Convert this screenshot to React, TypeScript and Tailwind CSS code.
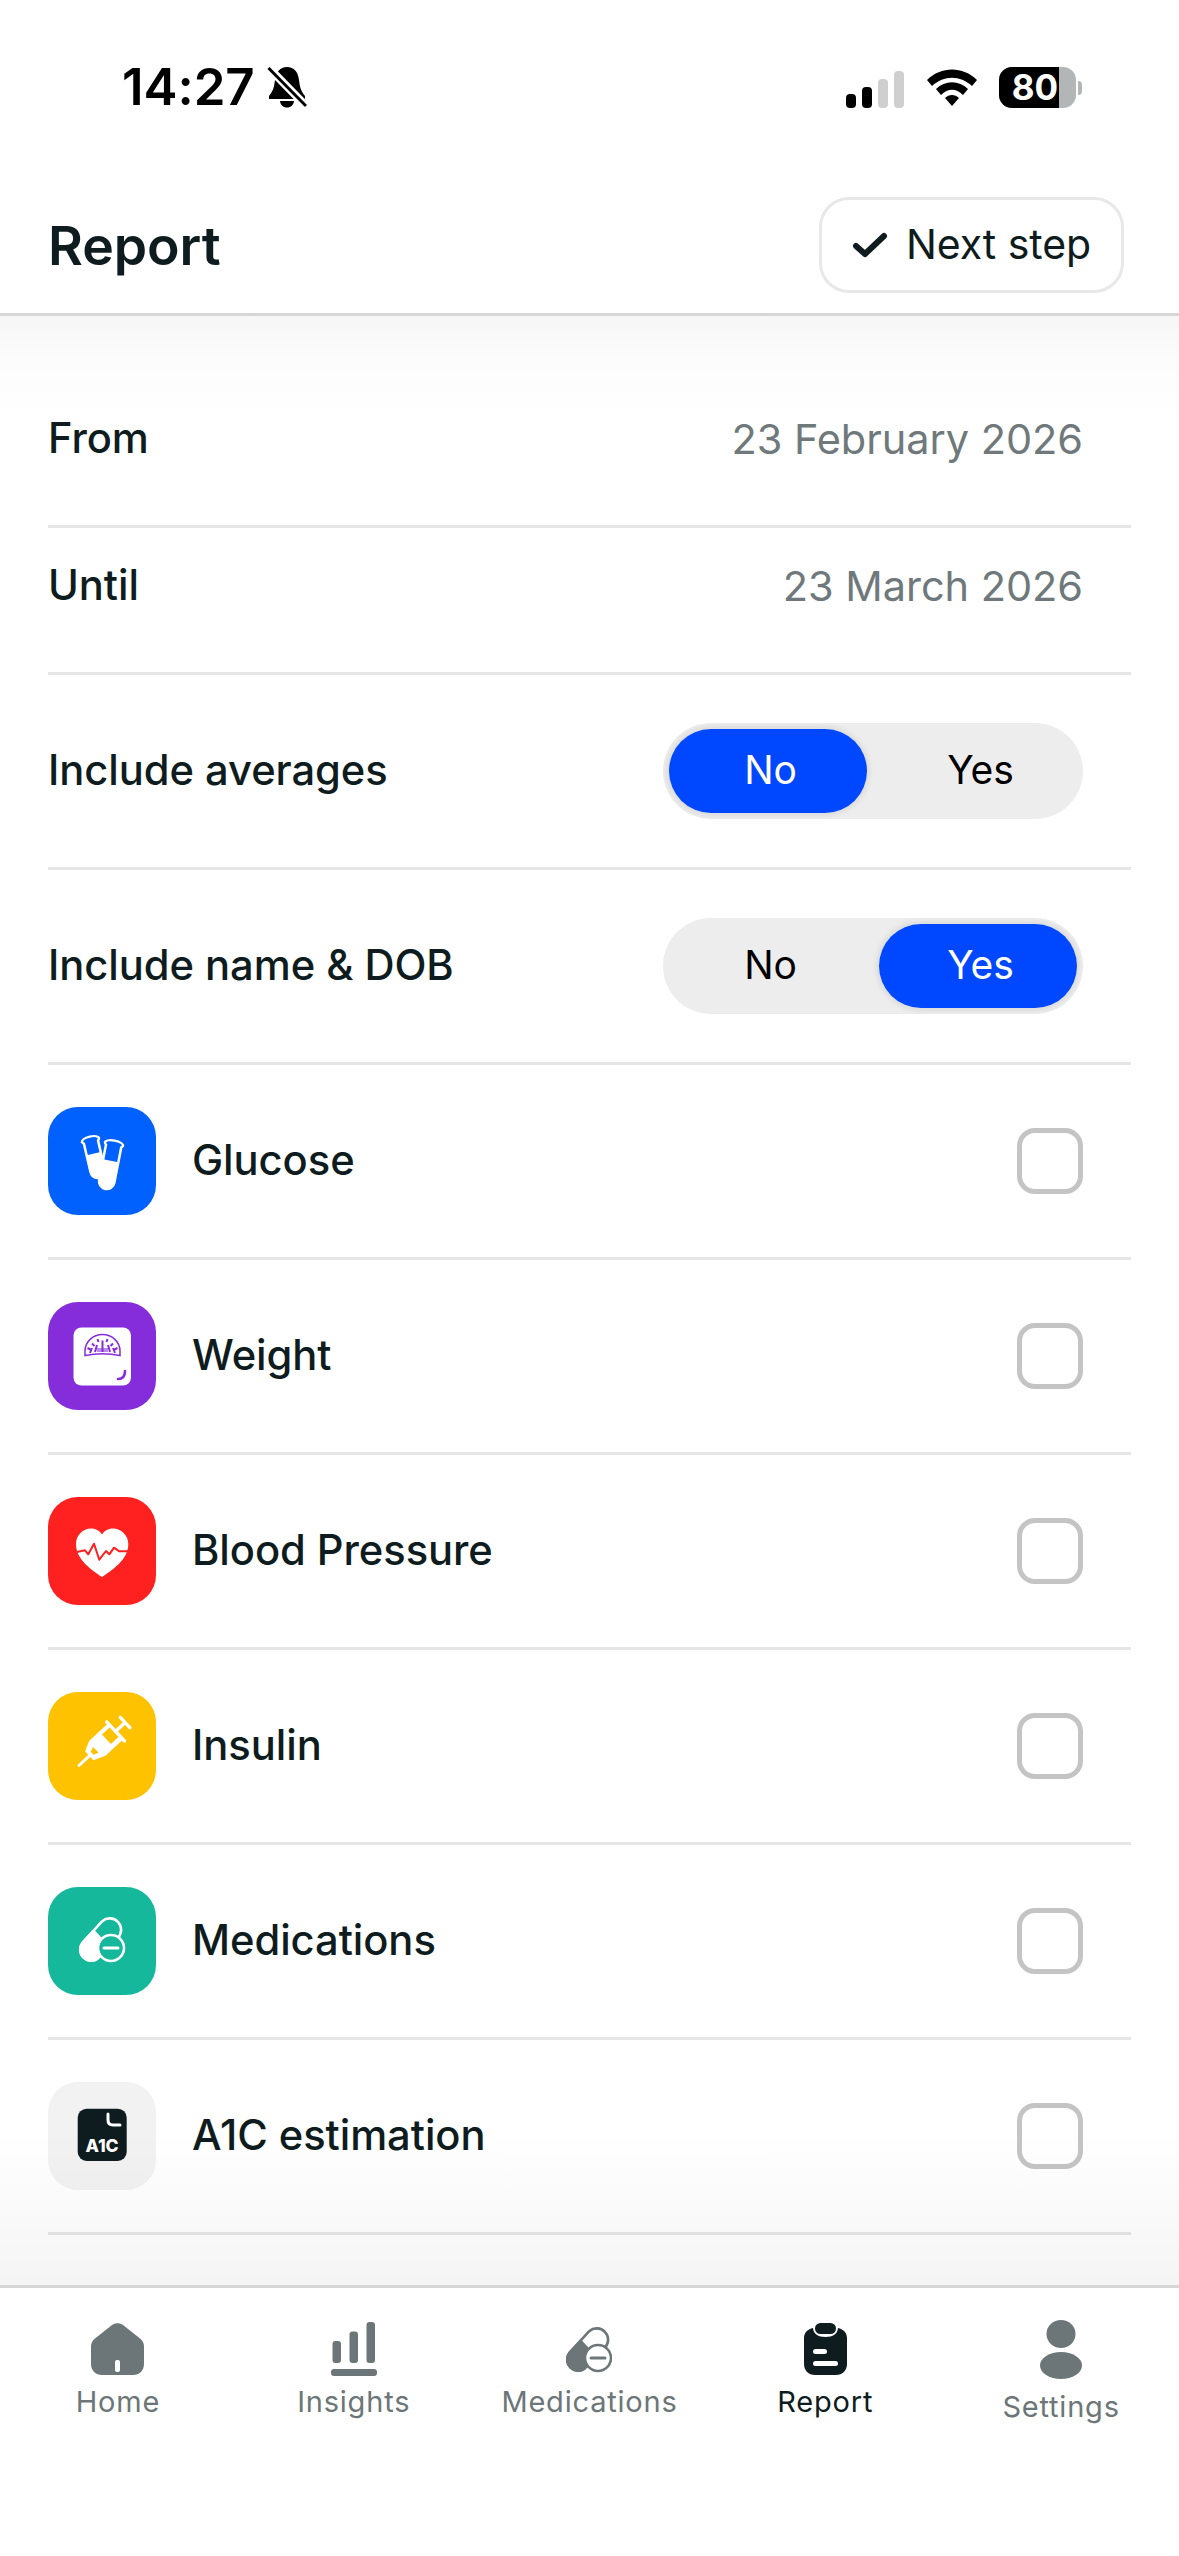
import type { ReactNode } from "react";

const ink = "#0e1c20";
const tabGray = "#6c7678";

function IconBox({ bg, children }: { bg: string; children: ReactNode }) {
  return (
    <div className={`h-[108px] w-[108px] shrink-0 overflow-hidden rounded-[30px] ${bg}`}>
      <svg viewBox="0 0 108 108" width="108" height="108">
        {children}
      </svg>
    </div>
  );
}

function Tube({ x, y, angle, len, w, win, fill }: { x: number; y: number; angle: number; len: number; w: number; win: number; fill: string }) {
  return (
    <g transform={`translate(${x} ${y}) rotate(${angle})`}>
      <path d={`M${-w / 2} 0 V${len - w / 2} a${w / 2} ${w / 2} 0 0 0 ${w} 0 V0 Z`} fill="#fff" />
      <ellipse cx="0" cy="0" rx={w / 2 + 1.5} ry="4.6" fill="#fff" />
      <path d={`M${-w / 2 + 2.5} 0 V${win} L${w / 2 - 2.5} ${win} V0 Z`} fill={fill} />
      <ellipse cx="0" cy="0" rx={w / 2 - 1} ry="2.4" fill={fill} />
    </g>
  );
}

function PillShape({ color, bg, stroke = 2.6 }: { color: string; bg: string; stroke?: number }) {
  return (
    <>
      <path d="M34.2 56.2 L54.2 34.2 A11.4 11.4 0 0 1 70 50.6 L49.5 71.6 A11 11 0 0 1 34.2 56.2 Z" fill="none" stroke={color} strokeWidth={stroke} />
      <path d="M34.2 56.2 L45.5 43.8 L60.5 60 L49.5 71.6 A11 11 0 0 1 34.2 56.2 Z" fill={color} stroke={color} strokeWidth={stroke} />
      <circle cx="63" cy="61" r="13" fill={bg} stroke={color} strokeWidth={stroke} />
      <path d="M56 61 H70" stroke={color} strokeWidth="3" strokeLinecap="round" />
    </>
  );
}

function GlucoseIcon() {
  return (
    <IconBox bg="bg-[#0061ff]">
      <Tube x={42.5} y={33} angle={-13} len={40} w={17} win={14} fill="#0061ff" />
      <Tube x={66} y={37} angle={11} len={47} w={18} win={17} fill="#0061ff" />
    </IconBox>
  );
}

function WeightIcon() {
  return (
    <IconBox bg="bg-[#862ddb]">
      <rect x="25.5" y="25.5" width="57.5" height="58" rx="8" fill="#fff" />
      <path d="M37 53.5 V49 A17.5 16.5 0 0 1 72 49 V53.5 Q54.5 50 37 53.5 Z" fill="none" stroke="#862ddb" strokeWidth="1.5" />
      <path d="M54.5 50 V38.5 M47 50 L49 43 M62 50 L60 43 M42 51 L44 46 M67 51 L65 46 M44 41.5 L46.5 44 M65 41.5 L62.5 44 M49.5 37 L50.5 40 M59.5 37 L58.5 40 M39.5 46 L42.5 47.5 M69.5 46 L66.5 47.5" stroke="#862ddb" strokeWidth="2" />
      <path d="M49 46 H60 V50 H49 Z" fill="#862ddb" opacity="0.55" />
      <path d="M70 77 Q77 77 77 69" fill="none" stroke="#862ddb" strokeWidth="2.6" strokeLinecap="round" />
    </IconBox>
  );
}

function HeartIcon() {
  return (
    <IconBox bg="bg-[#ff2020]">
      <path d="M54 80 C44 73 28 63 28 47 C28 38 35 31.5 43 31.5 C48 31.5 51.8 34 54 37.5 C56.2 34 60 31.5 65 31.5 C73 31.5 80.3 38 80.3 47 C80.3 63 64 73 54 80 Z" fill="#fff" />
      <path d="M29 55 L37 53.3 L40.3 57.3 L46 46.7 L51.3 62.7 L58 54 L61.3 57.3 L66 50.7 L71.3 54.3 L81 54.3" fill="none" stroke="#ff2020" strokeWidth="2" strokeLinejoin="round" />
    </IconBox>
  );
}

function InsulinIcon() {
  return (
    <IconBox bg="bg-[#ffc200]">
      <g transform="translate(31 73.5) rotate(-43)">
        <path d="M0 0 H16" stroke="#fff" strokeWidth="3" strokeLinecap="round" />
        <path d="M14 -6 L24 -11 H50 V11 H26 L14 6 Z" fill="#fff" />
        <path d="M18 -2 L23 -4 V4 L18 2 Z" fill="#ffc200" />
        <rect x="38" y="-7" width="11" height="13" fill="#ffc200" />
        <path d="M50 -13 V13" stroke="#fff" strokeWidth="3.4" strokeLinecap="round" />
        <path d="M50 0 H63" stroke="#fff" strokeWidth="3.4" />
        <path d="M63 -7 V7" stroke="#fff" strokeWidth="3.4" strokeLinecap="round" />
      </g>
    </IconBox>
  );
}

function A1cIcon() {
  return (
    <IconBox bg="bg-[#f2f2f2]">
      <rect x="29.7" y="26.7" width="49" height="52.3" rx="9" fill={ink} />
      <path d="M60 32 V38 Q60 43 65 43 H72" fill="none" stroke="#fff" strokeWidth="3" strokeLinecap="round" />
      <text x="54" y="70" textAnchor="middle" fill="#fff" fontSize="17.5" fontWeight="800" fontFamily="Inter, sans-serif">
        A1C
      </text>
    </IconBox>
  );
}

function MedsIcon() {
  return (
    <IconBox bg="bg-[#15b89a]">
      <PillShape color="#fff" bg="#15b89a" />
    </IconBox>
  );
}

function Toggle({ value }: { value: "No" | "Yes" }) {
  return (
    <div className="flex h-[96px] w-[420px] gap-[12px] rounded-full bg-[#ededed] p-[6px] text-[39px] font-normal leading-[46px]">
      {["No", "Yes"].map((opt) => (
        <div
          key={opt}
          className={
            opt === value
              ? "flex w-[198px] items-center justify-center rounded-full bg-[#0048ff] pb-[2px] pl-[5px] text-white shadow-[0_0_5px_3px_rgba(0,0,0,0.07)]"
              : "flex w-[198px] items-center justify-center rounded-full pb-[2px] pl-[5px] text-black"
          }
        >
          {opt}
        </div>
      ))}
    </div>
  );
}

function DateRow({ label, value }: { label: string; value: string }) {
  return (
    <div className="flex h-[147px] items-center justify-between border-b-[3px] border-[#e6e6e6] pb-[28px] pr-[48px]">
      <span className="mb-[2px]">{label}</span>
      <span className="text-[41.5px] font-normal text-[#6f797c]">{value}</span>
    </div>
  );
}

function ToggleRow({ label, value }: { label: string; value: "No" | "Yes" }) {
  return (
    <div className="flex h-[195px] items-center justify-between border-b-[3px] border-[#e6e6e6] pr-[48px]">
      <span className="mb-[2px]">{label}</span>
      <Toggle value={value} />
    </div>
  );
}

function CheckRow({ icon, label }: { icon: ReactNode; label: string }) {
  return (
    <div className="flex h-[195px] items-center border-b-[3px] border-[#e6e6e6] pr-[48px]">
      {icon}
      <span className="mb-[2px] ml-[36px] flex-1">{label}</span>
      <div className="h-[66px] w-[66px] rounded-[18px] border-[5px] border-[#c4c4c4] bg-white" />
    </div>
  );
}

function StatusBar() {
  return (
    <div className="flex h-[179px] items-start justify-between pl-[122px] pr-[97px] pt-[58px]">
      <div className="flex items-center gap-[12px]">
        <span className="text-[51px] font-semibold leading-[58px] text-black">14:27</span>
        <svg viewBox="0 0 40 42" width="40" height="42">
          <path d="M20 1 C27 1 31 6 32 14 C33 22 34 25 38 30 V33 H2 V30 C6 25 7 22 8 14 C9 6 13 1 20 1 Z" fill="#000" />
          <path d="M13 35 H27 C26.5 39 24 41.5 20 41.5 C16 41.5 13.5 39 13 35 Z" fill="#000" />
          <path d="M1 1 L39 40" stroke="#fff" strokeWidth="8" />
          <path d="M1.5 2 L39 40" stroke="#000" strokeWidth="3" />
        </svg>
      </div>
      <div className="flex items-center pt-[9px]">
        <div className="flex h-[41px] items-end gap-[6px]">
          <div className="h-[14px] w-[10px] rounded-[4px] bg-black" />
          <div className="h-[21px] w-[10px] rounded-[4px] bg-black" />
          <div className="h-[29px] w-[10px] rounded-[4px] bg-[#cfcfcf]" />
          <div className="h-[37px] w-[10px] rounded-[4px] bg-[#cfcfcf]" />
        </div>
        <svg viewBox="0 0 50 37" width="50" height="37" className="ml-[23px]">
          <path d="M0 11 C14 -3 36 -3 50 11 L45 17 C33 6 17 6 5 17 Z" fill="#000" />
          <path d="M9 20 C18 11 32 11 41 20 L36 26 C29 19 21 19 14 26 Z" fill="#000" />
          <path d="M18 29 C22 25 28 25 32 29 L25 37 Z" fill="#000" />
        </svg>
        <div className="ml-[22px] flex items-center">
          <div className="flex h-[41px] w-[77px] overflow-hidden rounded-[13px] bg-[#b3b6b6]">
            <div className="flex w-[60px] items-center justify-end bg-black pr-[1px] text-[35px] font-bold leading-none text-white">80</div>
          </div>
          <div className="ml-[2px] h-[14px] w-[4px] rounded-r-full bg-[#b3b6b6]" />
        </div>
      </div>
    </div>
  );
}

function Tab({ label, active, icon, low }: { label: string; active?: boolean; icon: ReactNode; low?: boolean }) {
  return (
    <div className={`flex flex-col items-center pt-[33px] text-[29px] tracking-[0.8px] ${active ? "text-[#0e1c20]" : "text-[#6c7678]"}`}>
      <div className="flex h-[56px] items-center justify-center">{icon}</div>
      <span className={low ? "mt-[12px] leading-[36px]" : "mt-[7px] leading-[36px]"}>{label}</span>
    </div>
  );
}

export default function App() {
  return (
    <div className="flex h-[2556px] w-[1179px] flex-col overflow-hidden bg-white font-['Inter',sans-serif] text-[41.7px] font-[450] tracking-[-0.05px] text-[#0e1c20]">
      <StatusBar />
      <header className="flex h-[137px] items-center justify-between border-b-[3px] border-[#d6d6d6] pb-[2px] pl-[48px] pr-[55px]">
        <h1 className="mt-[3px] text-[53.5px] font-semibold">Report</h1>
        <button className="flex h-[96px] w-[305px] items-center justify-center gap-[18px] rounded-[30px] border-[3px] border-[#e8e8e8] bg-white">
          <svg viewBox="0 0 36 26" width="36" height="26">
            <path d="M4 14 L13 22 L32 4" fill="none" stroke={ink} strokeWidth="6" strokeLinecap="round" strokeLinejoin="round" />
          </svg>
          <span className="text-[41px] font-normal">Next step</span>
        </button>
      </header>

      <main className="relative flex-1 overflow-hidden pl-[48px] pr-[48px] pt-[65px]">
        <DateRow label="From" value="23 February 2026" />
        <DateRow label="Until" value="23 March 2026" />
        <ToggleRow label="Include averages" value="No" />
        <ToggleRow label="Include name & DOB" value="Yes" />
        <CheckRow icon={<GlucoseIcon />} label="Glucose" />
        <CheckRow icon={<WeightIcon />} label="Weight" />
        <CheckRow icon={<HeartIcon />} label="Blood Pressure" />
        <CheckRow icon={<InsulinIcon />} label="Insulin" />
        <CheckRow icon={<MedsIcon />} label="Medications" />
        <CheckRow icon={<A1cIcon />} label="A1C estimation" />
        <div className="pointer-events-none absolute inset-x-0 top-0 h-[110px] bg-gradient-to-b from-black/[0.035] via-black/[0.012] via-40% to-transparent" />
        <div className="pointer-events-none absolute inset-x-0 bottom-0 h-[155px] bg-gradient-to-t from-black/[0.04] to-transparent" />
      </main>

      <nav className="grid h-[271px] shrink-0 grid-cols-5 border-t-[3px] border-[#d6d6d6] font-normal">
        <Tab
          label="Home"
          icon={
            <svg viewBox="0 0 53 52" width="53" height="52">
              <path d="M21 2 C24.5 -0.5 28.5 -0.5 32 2 L49 15.5 C51.8 18 53 20 53 24 V41 C53 47.5 48.5 52 42 52 H11 C4.5 52 0 47.5 0 41 V24 C0 20 1.2 18 4 15.5 Z" fill={tabGray} />
              <rect x="24" y="37" width="5" height="12" rx="2" fill="#fff" />
            </svg>
          }
        />
        <Tab
          label="Insights"
          icon={
            <svg viewBox="0 0 46 55" width="46" height="55">
              <rect x="1.5" y="19" width="8.5" height="22" rx="3" fill={tabGray} />
              <rect x="18.5" y="9.5" width="8.5" height="31.5" rx="3" fill={tabGray} />
              <rect x="35.5" y="0" width="8.5" height="41" rx="3" fill={tabGray} />
              <rect x="0" y="47" width="46" height="7" rx="3" fill={tabGray} />
            </svg>
          }
        />
        <Tab
          label="Medications"
          icon={
            <svg viewBox="31 29 46 47" width="46" height="47">
              <PillShape color={tabGray} bg="#fff" />
            </svg>
          }
        />
        <Tab
          label="Report"
          active
          icon={
            <svg viewBox="0 0 43 52" width="43" height="52">
              <path d="M9 5 C9.5 11 14 14 21.5 14 C29 14 33.5 11 34 5 C39 6 43 9.5 43 15 V41 C43 47.5 38.5 52 32 52 H11 C4.5 52 0 47.5 0 41 V15 C0 9.5 4 6 9 5 Z" fill={ink} />
              <rect x="11" y="0" width="21" height="11" rx="5.5" fill={ink} />
              <rect x="9" y="26" width="14" height="5" rx="2.5" fill="#fff" />
              <rect x="9" y="38" width="25" height="5" rx="2.5" fill="#fff" />
            </svg>
          }
        />
        <Tab
          label="Settings"
          low
          icon={
            <svg viewBox="0 0 42 59" width="42" height="59">
              <ellipse cx="21" cy="14" rx="14.5" ry="14" fill={tabGray} />
              <ellipse cx="21" cy="45.5" rx="21" ry="13.5" fill={tabGray} />
            </svg>
          }
        />
      </nav>
    </div>
  );
}
